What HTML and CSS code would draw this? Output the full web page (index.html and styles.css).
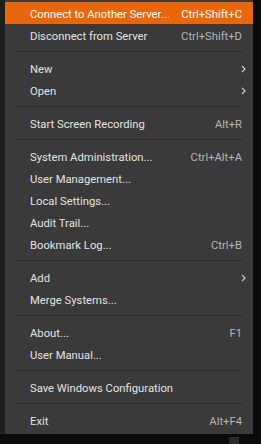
FILE: index.html
```html
<!DOCTYPE html>
<html>
<head>
<meta charset="utf-8">
<link rel="stylesheet" href="styles.css">
</head>
<body>
<div class="top">
  <div class="strip"></div>
  <div class="menu">
    <div class="item active"><span class="label">Connect to Another Server...</span><span class="key">Ctrl+Shift+C</span></div>
    <div class="item"><span class="label">Disconnect from Server</span><span class="key">Ctrl+Shift+D</span></div>
    <div class="sep"></div>
    <div class="item"><span class="label">New</span><svg class="arrow" width="5" height="8" viewBox="0 0 5 8"><path d="M1 0.8 L4 4 L1 7.2" fill="none" stroke="#cfcfcf" stroke-width="1.2"/></svg></div>
    <div class="item"><span class="label">Open</span><svg class="arrow" width="5" height="8" viewBox="0 0 5 8"><path d="M1 0.8 L4 4 L1 7.2" fill="none" stroke="#cfcfcf" stroke-width="1.2"/></svg></div>
    <div class="sep"></div>
    <div class="item"><span class="label">Start Screen Recording</span><span class="key">Alt+R</span></div>
    <div class="sep"></div>
    <div class="item"><span class="label">System Administration...</span><span class="key">Ctrl+Alt+A</span></div>
    <div class="item"><span class="label">User Management...</span></div>
    <div class="item"><span class="label">Local Settings...</span></div>
    <div class="item"><span class="label">Audit Trail...</span></div>
    <div class="item"><span class="label">Bookmark Log...</span><span class="key">Ctrl+B</span></div>
    <div class="sep"></div>
    <div class="item"><span class="label">Add</span><svg class="arrow" width="5" height="8" viewBox="0 0 5 8"><path d="M1 0.8 L4 4 L1 7.2" fill="none" stroke="#cfcfcf" stroke-width="1.2"/></svg></div>
    <div class="item"><span class="label">Merge Systems...</span></div>
    <div class="sep"></div>
    <div class="item"><span class="label">About...</span><span class="key">F1</span></div>
    <div class="item"><span class="label">User Manual...</span></div>
    <div class="sep"></div>
    <div class="item"><span class="label">Save Windows Configuration</span></div>
    <div class="sep"></div>
    <div class="item"><span class="label">Exit</span><span class="key">Alt+F4</span></div>
  </div>
</div>
<div class="bottom">
  <div class="square"></div>
</div>
</body>
</html>
```
FILE: styles.css
```css
html, body {
  margin: 0;
  padding: 0;
}
body {
  background: #0b0b0b;
  width: 261px;
  height: 444px;
  overflow: hidden;
  font-family: Roboto, "Liberation Sans", sans-serif;
  font-size: 11.25px;
}
.top {
  display: flex;
}
.strip {
  width: 5px;
  background: #1f1f1f;
}
.menu {
  width: 248px;
  background: #3a3a3a;
  padding: 2px 0 3px;
  box-sizing: border-box;
  display: flex;
  flex-direction: column;
}
.item {
  height: 22px;
  box-sizing: border-box;
  display: flex;
  align-items: center;
  justify-content: space-between;
  padding: 2px 11px 0 25px;
  color: #e2e2e2;
}
.item.active {
  background: #e8670c;
  color: #ffffff;
}
.key {
  color: #b4b4b4;
}
.item.active .key {
  color: #ffffff;
}
.arrow {
  margin-right: -4px;
}
.sep {
  height: 11px;
  display: flex;
  align-items: center;
  padding: 0 11px;
}
.sep::before {
  content: "";
  flex: 1;
  height: 1px;
  background: #2c2c2c;
}
.bottom {
  display: flex;
  padding: 3px 0 0 229px;
}
.square {
  width: 10px;
  height: 10px;
  background: #2a2a2a;
}
```
